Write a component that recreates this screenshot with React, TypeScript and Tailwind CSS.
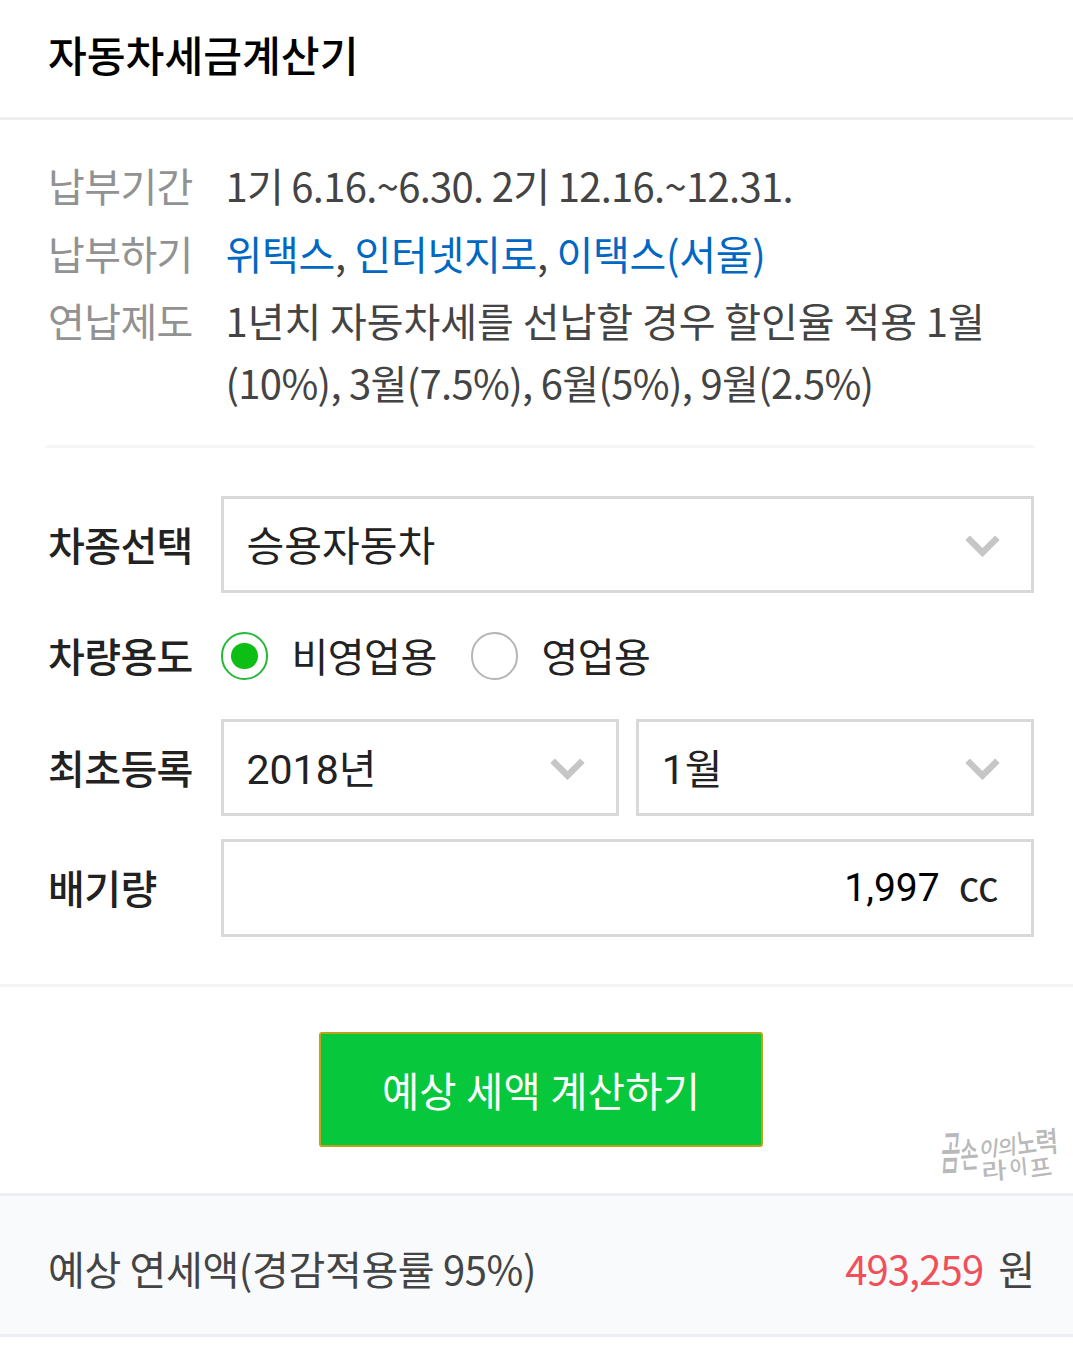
import { useState } from 'react'
import type { ReactNode } from 'react'

function Chevron() {
  return (
    <svg width="36" height="24" viewBox="0 0 36 24" fill="none" className="shrink-0">
      <path d="M2.6 4.8 17.5 19.6 32.4 4.8" stroke="#c6c6c6" strokeWidth="6.4" />
    </svg>
  )
}

function InfoRow({ label, children }: { label: string; children: ReactNode }) {
  return (
    <div className="flex">
      <dt className="w-[177.5px] shrink-0 tracking-[-0.6px] text-[#929292]">{label}</dt>
      <dd className="flex-1">{children}</dd>
    </div>
  )
}

function FormLabel({ children }: { children: ReactNode }) {
  return <span className="w-[172.5px] shrink-0 pb-[2px] font-medium tracking-[-0.6px]">{children}</span>
}

function SelectBox({ value }: { value: string }) {
  return (
    <button
      type="button"
      className="flex h-[97px] flex-1 items-center justify-between border-[3px] border-[#d9d9d9] bg-white pr-[30px] pl-[23px] font-[Roboto,'Noto_Sans_CJK_KR',sans-serif] text-[41px]"
    >
      <span className="pt-[7px]">{value}</span>
      <Chevron />
    </button>
  )
}

function Radio({ label, checked, onSelect }: { label: string; checked: boolean; onSelect: () => void }) {
  return (
    <button type="button" onClick={onSelect} className="flex items-center">
      <span
        className={
          checked
            ? 'flex size-[47.5px] items-center justify-center rounded-full border-[2.5px] border-[#23b838]'
            : 'flex size-[47.5px] items-center justify-center rounded-full border-[2.5px] border-[#b5b5b5]'
        }
      >
        {checked && <span className="size-[26.5px] rounded-full bg-[#0dbe14]" />}
      </span>
      <span className="ml-[23.5px] pb-[2px] tracking-[-0.5px]">{label}</span>
    </button>
  )
}

function Watermark() {
  return (
    <svg
      width="140"
      height="80"
      viewBox="0 0 140 80"
      className="absolute right-0 bottom-0 font-['Noto_Sans_CJK_KR',sans-serif] font-medium"
      fill="#b9b9b9"
    >
      <text transform="translate(7 57) rotate(-2) skewX(-6) scale(.62 1.35)" fontSize="34">곰</text>
      <text transform="translate(28 55) rotate(-4) scale(.74 1.3)" fontSize="27">손</text>
      <text transform="translate(46 44) rotate(-4) skewX(-10)" fontSize="21">이</text>
      <text transform="translate(65 43) rotate(-8) skewX(-8)" fontSize="21">의</text>
      <text transform="translate(85 42) rotate(-8) scale(.9 1.25)" fontSize="24">노</text>
      <text transform="translate(103 40) rotate(-4) scale(1 1.15)" fontSize="25">력</text>
      <text transform="translate(49 67) rotate(-4) scale(1.2 1)" fontSize="23">라</text>
      <text transform="translate(77 62) rotate(-5)" fontSize="20">이</text>
      <text transform="translate(98 65) rotate(-8)" fontSize="24">프</text>
    </svg>
  )
}

function App() {
  const [usage, setUsage] = useState('private')

  return (
    <div className="min-h-screen bg-white font-['Noto_Sans_CJK_KR',sans-serif] text-[40px] text-[#222]">
      <header className="flex h-[120px] items-center border-b-[3px] border-[#eee] px-12 pb-[9px]">
        <h1 className="text-[42.2px] leading-none font-medium text-black">자동차세금계산기</h1>
      </header>

      <section className="mr-[39px] ml-[46px] flex h-[328px] border-b-[3px] border-[#f5f5f5] pt-[35px] pl-[2px]">
        <dl className="flex flex-1 flex-col gap-1.5 leading-[61.5px] text-[#444]">
          <InfoRow label="납부기간">
            <span className="tracking-[-0.7px]">1기 6.16.~6.30. 2기 12.16.~12.31.</span>
          </InfoRow>
          <InfoRow label="납부하기">
            <span className="tracking-[-0.3px]">
              <a className="text-[#0068c3]">위택스</a>, <a className="text-[#0068c3]">인터넷지로</a>,{' '}
              <a className="text-[#0068c3]">이택스(서울)</a>
            </span>
          </InfoRow>
          <InfoRow label="연납제도">
            <span className="tracking-[-0.05px]">1년치 자동차세를 선납할 경우 할인율 적용 1월</span>
            <br />
            <span className="tracking-[-0.68px]">(10%), 3월(7.5%), 6월(5%), 9월(2.5%)</span>
          </InfoRow>
        </dl>
      </section>

      <section className="flex h-[539px] flex-col border-b-[3px] border-[#f4f4f4] pt-[48px] pr-[39px] pl-[48px]">
        <div className="flex items-center">
          <FormLabel>차종선택</FormLabel>
          <SelectBox value="승용자동차" />
        </div>
        <div className="flex h-[126px] items-center">
          <FormLabel>차량용도</FormLabel>
          <div className="flex">
            <div className="w-[250px]">
              <Radio label="비영업용" checked={usage === 'private'} onSelect={() => setUsage('private')} />
            </div>
            <Radio label="영업용" checked={usage === 'business'} onSelect={() => setUsage('business')} />
          </div>
        </div>
        <div className="flex items-center">
          <FormLabel>최초등록</FormLabel>
          <div className="flex flex-1 gap-[17px]">
            <SelectBox value="2018년" />
            <SelectBox value="1월" />
          </div>
        </div>
        <div className="mt-[23px] flex items-center">
          <FormLabel>배기량</FormLabel>
          <div className="flex h-[98px] flex-1 items-center justify-end border-[3px] border-[#d9d9d9] pr-[32.5px]">
            <span className="font-[Roboto,sans-serif] text-[39px] text-black">1,997</span>
            <span className="ml-[19px] pb-[9px]">cc</span>
          </div>
        </div>
      </section>

      <section className="relative flex h-[206px] items-start justify-center pt-[45px] pl-[9px]">
        <button
          type="button"
          className="h-[115px] w-[444px] rounded-[3px] border-2 border-[#bda31a] bg-[#07c73c] pt-[1px] text-[40.5px] tracking-[0.2px] text-white"
        >
          예상 세액 계산하기
        </button>
        <Watermark />
      </section>

      <section className="flex h-[144px] items-center justify-between border-y-[3px] border-[#ebeff3] bg-[#f8fafc] pt-[6px] pr-[38px] pl-[48px] text-[#444]">
        <span className="tracking-[-0.35px]">예상 연세액(경감적용률 95%)</span>
        <span>
          <strong className="mr-[15px] font-normal tracking-[-0.9px] text-[#f0505a]">493,259</strong>원
        </span>
      </section>
    </div>
  )
}

export default App
